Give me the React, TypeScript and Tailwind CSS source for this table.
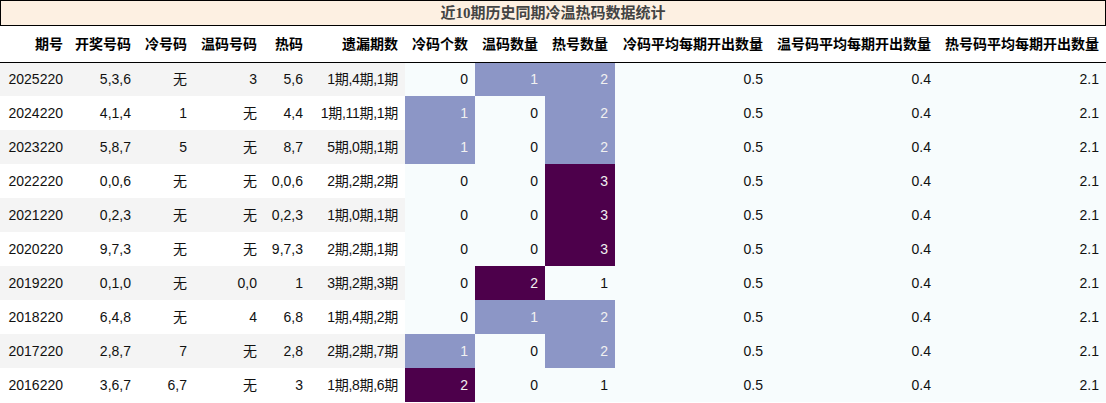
import React from "react";

type Row = {
  issue: string;
  draw: string;
  cold: string;
  warm: string;
  hot: string;
  miss: string;
  coldN: number;
  warmN: number;
  hotN: number;
};

const ROWS: Row[] = [
  { issue: "2025220", draw: "5,3,6", cold: "无", warm: "3", hot: "5,6", miss: "1期,4期,1期", coldN: 0, warmN: 1, hotN: 2 },
  { issue: "2024220", draw: "4,1,4", cold: "1", warm: "无", hot: "4,4", miss: "1期,11期,1期", coldN: 1, warmN: 0, hotN: 2 },
  { issue: "2023220", draw: "5,8,7", cold: "5", warm: "无", hot: "8,7", miss: "5期,0期,1期", coldN: 1, warmN: 0, hotN: 2 },
  { issue: "2022220", draw: "0,0,6", cold: "无", warm: "无", hot: "0,0,6", miss: "2期,2期,2期", coldN: 0, warmN: 0, hotN: 3 },
  { issue: "2021220", draw: "0,2,3", cold: "无", warm: "无", hot: "0,2,3", miss: "1期,0期,1期", coldN: 0, warmN: 0, hotN: 3 },
  { issue: "2020220", draw: "9,7,3", cold: "无", warm: "无", hot: "9,7,3", miss: "2期,2期,1期", coldN: 0, warmN: 0, hotN: 3 },
  { issue: "2019220", draw: "0,1,0", cold: "无", warm: "0,0", hot: "1", miss: "3期,2期,3期", coldN: 0, warmN: 2, hotN: 1 },
  { issue: "2018220", draw: "6,4,8", cold: "无", warm: "4", hot: "6,8", miss: "1期,4期,2期", coldN: 0, warmN: 1, hotN: 2 },
  { issue: "2017220", draw: "2,8,7", cold: "7", warm: "无", hot: "2,8", miss: "2期,2期,7期", coldN: 1, warmN: 0, hotN: 2 },
  { issue: "2016220", draw: "3,6,7", cold: "6,7", warm: "无", hot: "3", miss: "1期,8期,6期", coldN: 2, warmN: 0, hotN: 1 },
];

const HEADERS = [
  "期号",
  "开奖号码",
  "冷号码",
  "温码号码",
  "热码",
  "遗漏期数",
  "冷码个数",
  "温码数量",
  "热号数量",
  "冷码平均每期开出数量",
  "温号码平均每期开出数量",
  "热号码平均每期开出数量",
];

const WIDTHS = ["w-[70px]", "w-[68px]", "w-[56px]", "w-[70px]", "w-[46px]", "w-[95px]", "w-[70px]", "w-[70px]", "w-[70px]", "w-[155px]", "w-[168px]", "w-[168px]"];

// BuPu gradient: low / mid / high
function gradCls(v: number, min: number, max: number) {
  if (v === max) return "bg-[#4d004b] text-[#f1f1f1]";
  if (v > min) return "bg-[#8c96c6] text-[#f1f1f1]";
  return "bg-[#f7fcfd] text-[#111]";
}

export default function App() {
  return (
    <div className="w-[1106px] bg-white font-['Liberation_Sans','Noto_Sans_CJK_SC',sans-serif] text-[14px] text-[#111]">
      <div className="flex h-[26px] items-center justify-center border border-black bg-[#fdf0e2] font-['Liberation_Serif','Noto_Sans_CJK_SC',serif] text-[15px] font-bold text-[#444]">
        近10期历史同期冷温热码数据统计
      </div>
      <table className="w-[1106px] table-fixed border-collapse">
        <colgroup>
          {WIDTHS.map((w, i) => (
            <col key={i} className={w} />
          ))}
        </colgroup>
        <thead>
          <tr className="h-[36px] border-b border-black">
            {HEADERS.map((h) => (
              <th key={h} className="whitespace-nowrap pr-[7px] text-right font-['Noto_Sans_CJK_SC',sans-serif] font-bold text-black">
                {h}
              </th>
            ))}
          </tr>
        </thead>
        <tbody>
          {ROWS.map((r, i) => {
            const band = i % 2 === 0 ? "bg-[#f4f4f4]" : "bg-white";
            const cell = "h-[34px] whitespace-nowrap pr-[7px] text-right";
            return (
              <tr key={r.issue}>
                <td className={`${cell} ${band} pl-[8px] text-left`}>{r.issue}</td>
                <td className={`${cell} ${band}`}>{r.draw}</td>
                <td className={`${cell} ${band}`}>{r.cold}</td>
                <td className={`${cell} ${band}`}>{r.warm}</td>
                <td className={`${cell} ${band}`}>{r.hot}</td>
                <td className={`${cell} ${band} tracking-[-0.3px]`}>{r.miss}</td>
                <td className={`${cell} ${gradCls(r.coldN, 0, 2)}`}>{r.coldN}</td>
                <td className={`${cell} ${gradCls(r.warmN, 0, 2)}`}>{r.warmN}</td>
                <td className={`${cell} ${gradCls(r.hotN, 1, 3)}`}>{r.hotN}</td>
                <td className={`${cell} bg-[#f7fcfd]`}>0.5</td>
                <td className={`${cell} bg-[#f7fcfd]`}>0.4</td>
                <td className={`${cell} bg-[#f7fcfd]`}>2.1</td>
              </tr>
            );
          })}
        </tbody>
      </table>
    </div>
  );
}
